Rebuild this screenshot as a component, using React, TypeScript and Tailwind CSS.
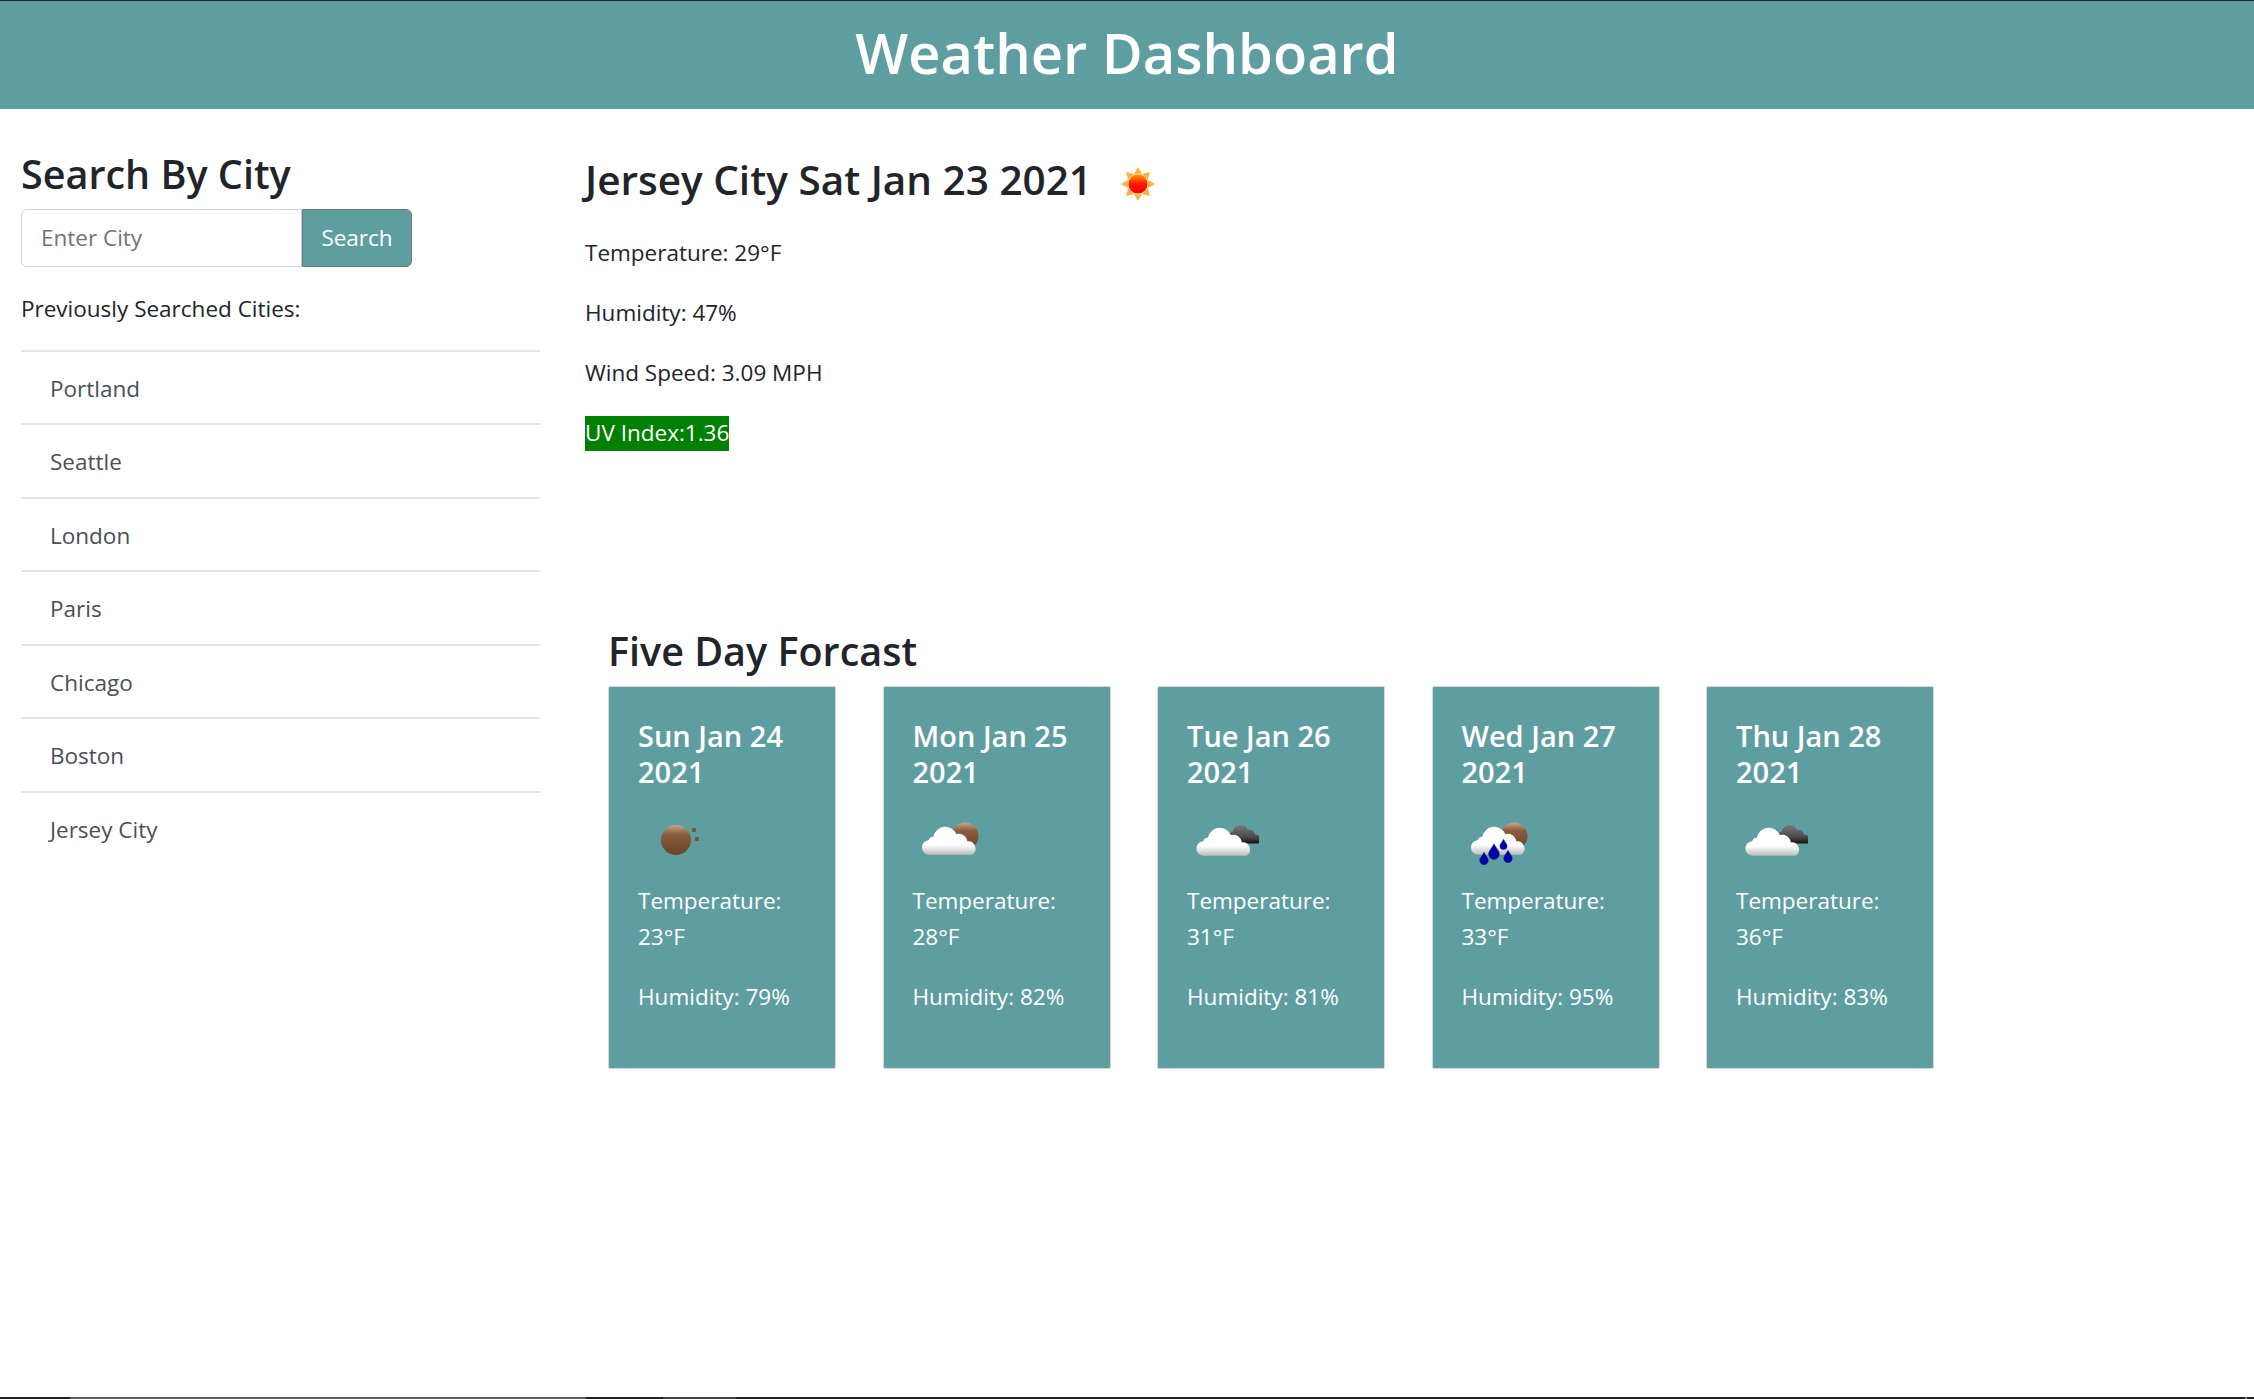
const font = "font-['Open_Sans','Noto_Sans',sans-serif]";

function Sun() {
  return (
    <svg width="72" height="72" viewBox="0 0 72 72">
      <defs>
        <linearGradient id="sunG" x1="0" y1="0" x2="0" y2="1">
          <stop offset="0" stopColor="#ffa000" />
          <stop offset="0.5" stopColor="#ff1800" />
          <stop offset="1" stopColor="#f00010" />
        </linearGradient>
      </defs>
      {[0, 45, 90, 135, 180, 225, 270, 315].map((a) => (
        <polygon key={a} points="36,19 40,26 32,26" fill="#ffb040" transform={`rotate(${a} 36 36)`} />
      ))}
      <circle cx="36" cy="36" r="10" fill="url(#sunG)" stroke="#ffd080" strokeWidth="1" />
    </svg>
  );
}

function Ball({ cx, cy, r, id }: { cx: number; cy: number; r: number; id: string }) {
  return (
    <g>
      <defs>
        <linearGradient id={id} x1="0" y1="0" x2="0" y2="1">
          <stop offset="0" stopColor="#c9a78c" />
          <stop offset="0.3" stopColor="#8a5e3e" />
          <stop offset="1" stopColor="#66412a" />
        </linearGradient>
      </defs>
      <circle cx={cx} cy={cy} r={r} fill={`url(#${id})`} />
    </g>
  );
}

function Cloud({ dx = 0, dy = 0, s = 1, dark = false, id }: { dx?: number; dy?: number; s?: number; dark?: boolean; id: string }) {
  return (
    <g transform={`translate(${dx} ${dy}) scale(${s})`}>
      <defs>
        <linearGradient id={id} x1="0" y1="0" x2="0" y2="1">
          <stop offset="0" stopColor={dark ? "#777" : "#fff"} />
          <stop offset="0.65" stopColor={dark ? "#4a4a4a" : "#fff"} />
          <stop offset="1" stopColor={dark ? "#111" : "#bdbdbd"} />
        </linearGradient>
      </defs>
      <path
        d="M6 27a6 6 0 0 1 -1 -12 a5 5 0 0 1 4 -3 a10 10 0 0 1 19 -2 a7 7 0 0 1 9 6 a6 6 0 0 1 4 11 z"
        fill={`url(#${id})`}
      />
    </g>
  );
}

function Drop({ x, y, s = 1 }: { x: number; y: number; s?: number }) {
  return (
    <path
      d={`M${x} ${y - 6 * s} C${x + 2 * s} ${y - 2 * s} ${x + 4.5 * s} ${y} ${x + 4.5 * s} ${y + 2.5 * s} a${4.5 * s} ${4.5 * s} 0 0 1 ${-9 * s} 0 C${x - 4.5 * s} ${y} ${x - 2 * s} ${y - 2 * s} ${x} ${y - 6 * s} z`}
      fill="#0000a8"
      stroke="#0a2a80"
      strokeWidth="0.5"
    />
  );
}

function Icon({ kind, i }: { kind: string; i: number }) {
  if (kind === "ball")
    return (
      <svg width="72" height="72" viewBox="0 0 72 72">
        <Ball cx={38} cy={36} r={15} id={`b${i}`} />
        <rect x="54" y="24" width="4" height="4" rx="1" fill="#7a5238" />
        <rect x="57" y="33" width="4" height="4" rx="1" fill="#7a5238" />
      </svg>
    );
  if (kind === "suncloud")
    return (
      <svg width="72" height="72" viewBox="0 0 72 72">
        <Ball cx={52} cy={32} r={13.5} id={`b${i}`} />
        <Cloud dx={9.5} dy={18} s={1.21} id={`c${i}`} />
      </svg>
    );
  if (kind === "darkcloud")
    return (
      <svg width="72" height="72" viewBox="0 0 72 72">
        <Cloud dx={38.5} dy={18} s={0.8} dark id={`d${i}`} />
        <Cloud dx={10} dy={19} s={1.21} id={`c${i}`} />
      </svg>
    );
  return (
    <svg width="72" height="72" viewBox="0 0 72 72">
      <Ball cx={52} cy={32} r={13.5} id={`b${i}`} />
      <Cloud dx={9.5} dy={18} s={1.21} id={`c${i}`} />
      <Drop x={22} y={54} s={0.95} />
      <Drop x={32} y={47} s={1.2} />
      <Drop x={41.5} y={40} s={0.8} />
      <Drop x={46} y={52} s={0.95} />
    </svg>
  );
}

const cities = ["Portland", "Seattle", "London", "Paris", "Chicago", "Boston", "Jersey City"];
const days = [
  { d: "Sun Jan 24 2021", t: "23°F", h: "79%", k: "ball" },
  { d: "Mon Jan 25 2021", t: "28°F", h: "82%", k: "suncloud" },
  { d: "Tue Jan 26 2021", t: "31°F", h: "81%", k: "darkcloud" },
  { d: "Wed Jan 27 2021", t: "33°F", h: "95%", k: "rain" },
  { d: "Thu Jan 28 2021", t: "36°F", h: "83%", k: "darkcloud" },
];

export default function App() {
  return (
    <div className={`${font} flex h-[1399px] flex-col overflow-hidden bg-white text-[22.5px] leading-[34.5px] text-[#212529]`}>
      <header className="h-[109px] border-t border-[#1f2a2c] bg-[#5f9ea0] text-center text-[56px] font-semibold leading-[103px] text-white">
        Weather Dashboard
      </header>
      <div className="flex flex-1">
        <aside className="w-[585px] shrink-0 pl-[21px] pr-[45px] pt-[42px]">
          <h3 className="text-[39.5px] font-semibold leading-[46px]">Search By City</h3>
          <div className="mt-[12px] flex h-[58px] w-[391px]">
            <div className="flex flex-1 items-center rounded-l-[6px] border border-[#ced4da] pl-[19px] pt-[1px] text-[#6c757d]">
              Enter City
            </div>
            <button className="w-[110px] rounded-r-[6px] border border-[#6c757d] bg-[#5f9ea0] pt-[1px] text-white">Search</button>
          </div>
          <p className="mt-[25px] text-[#212529]">Previously Searched Cities:</p>
          <ul className="mt-[23px]">
            {cities.map((c) => (
              <li key={c} className="h-[73.5px] border-t-2 border-[#e3e4e5] pb-[14px] pl-[29px] pt-[20px] text-[#495057]">
                {c}
              </li>
            ))}
          </ul>
        </aside>
        <main className="flex-1 pt-[43px]">
          <div className="flex items-center">
            <h3 className="text-[40.5px] font-semibold leading-[48px]">Jersey City Sat Jan 23 2021</h3>
            <span className="ml-[10px] mt-[8px] flex h-[48px] w-[72px] items-center justify-center">
              <Sun />
            </span>
          </div>
          <p className="mt-[28px]">Temperature: 29°F</p>
          <p className="mt-[25.5px]">Humidity: 47%</p>
          <p className="mt-[25.5px]">Wind Speed: 3.09 MPH</p>
          <p className="mt-[25.5px] w-[144px] whitespace-nowrap bg-[#008000] text-white">UV Index:1.36</p>
          <div className="ml-[23px] mt-[177px]">
            <h3 className="text-[39.5px] font-semibold leading-[46px]">Five Day Forcast</h3>
            <div className="mt-[12px] flex gap-[46.5px]">
              {days.map((x, i) => (
                <div key={x.d} className="h-[383px] w-[228px] rounded-[2px] border border-[#d4d8d8] bg-[#5f9ea0] px-[29px] pt-[31px] text-white">
                  <h5 className="text-[29px] font-semibold leading-[36px]">{x.d}</h5>
                  <div className="mt-[14px] h-[72px]">
                    <Icon kind={x.k} i={i} />
                  </div>
                  <p className="mt-[7.5px] leading-[36px]">Temperature: {x.t}</p>
                  <p className="mt-[24.5px]">Humidity: {x.h}</p>
                </div>
              ))}
            </div>
          </div>
        </main>
      </div>
      <div className="flex h-[2px] bg-[#1f1f1f]">
        <div className="ml-[70px] w-[516px] bg-[#5f5f5f]" />
        <div className="ml-[77px] w-[73px] bg-[#444444]" />
        <div className="ml-auto mr-[7px] w-[2px] bg-[#888888]" />
      </div>
    </div>
  );
}
